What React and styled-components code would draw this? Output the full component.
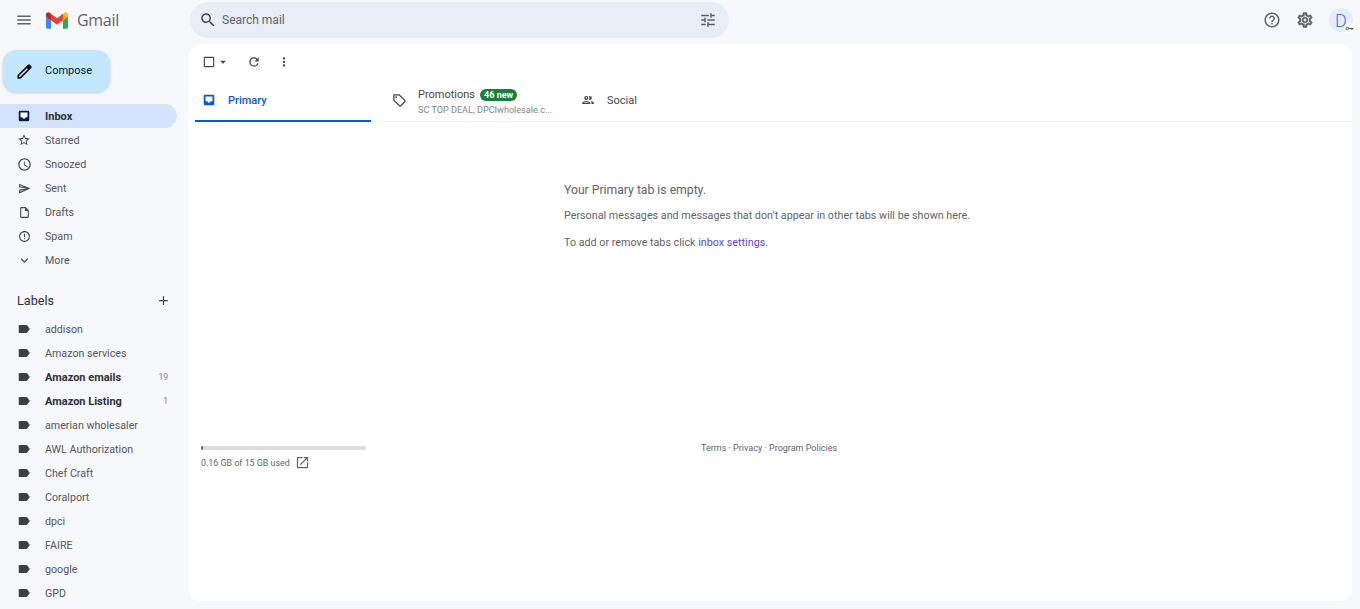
import styled, { createGlobalStyle } from "styled-components";

const GlobalStyle = createGlobalStyle`
  html, body {
    margin: 0;
    padding: 0;
    height: 100%;
    overflow: hidden;
    background-color: #f6f8fc;
    font-family: Roboto, "Liberation Sans", sans-serif;
    color: #444746;
  }
`;

const paths = {
  menu: "M3 18h18v-2H3v2zm0-5h18v-2H3v2zm0-7v2h18V6H3z",
  pencil: "M20.41 4.94l-1.35-1.35c-.78-.78-2.05-.78-2.83 0L3 16.82V21h4.18L20.41 7.77c.79-.78.79-2.05 0-2.83zm-14 14.12L5 19v-1.36l9.82-9.82 1.41 1.41-9.82 9.83z",
  star: "M22 9.24l-7.19-.62L12 2 9.19 8.63 2 9.24l5.46 4.73L5.82 21 12 17.27 18.18 21l-1.63-7.03L22 9.24zM12 15.4l-3.76 2.27 1-4.28-3.32-2.88 4.38-.38L12 6.1l1.71 4.04 4.38.38-3.32 2.88 1 4.28L12 15.4z",
  clock: "M11.99 2C6.47 2 2 6.48 2 12s4.47 10 9.99 10C17.52 22 22 17.52 22 12S17.52 2 11.99 2zM12 20c-4.42 0-8-3.58-8-8s3.58-8 8-8 8 3.58 8 8-3.58 8-8 8zm.5-13H11v6l5.25 3.15.75-1.23-4.5-2.67z",
  send: "M4.01 6.03l7.51 3.22-7.52-1 .01-2.22m7.5 8.72L4 17.97v-2.22l7.51-1M2.01 3L2 10l15 2-15 2 .01 7L23 12 2.01 3z",
  draft: "M14 2H6c-1.1 0-1.99.9-1.99 2L4 20c0 1.1.89 2 1.99 2H18c1.1 0 2-.9 2-2V8l-6-6zM6 20V4h7v5h5v11H6z",
  spam: "M11 15h2v2h-2zm0-8h2v6h-2zm.99-5C6.47 2 2 6.48 2 12s4.47 10 9.99 10C17.52 22 22 17.52 22 12S17.52 2 11.99 2zM12 20c-4.42 0-8-3.58-8-8s3.58-8 8-8 8 3.58 8 8-3.58 8-8 8z",
  chevron: "M16.59 8.59L12 13.17 7.41 8.59 6 10l6 6 6-6z",
  plus: "M19 13h-6v6h-2v-6H5v-2h6V5h2v6h6v2z",
  label: "M17.63 5.84C17.27 5.33 16.67 5 16 5L5 5.01C3.9 5.01 3 5.9 3 7v10c0 1.1.9 1.99 2 1.99L16 19c.67 0 1.27-.33 1.63-.84L22 12l-4.37-6.16z",
  search: "M15.5 14h-.79l-.28-.27C15.41 12.59 16 11.11 16 9.5 16 5.91 13.09 3 9.5 3S3 5.91 3 9.5 5.91 16 9.5 16c1.61 0 3.09-.59 4.23-1.57l.27.28v.79l5 4.99L20.49 19l-4.99-5zm-6 0C7.01 14 5 11.99 5 9.5S7.01 5 9.5 5 14 7.01 14 9.5 11.99 14 9.5 14z",
  tune: "M3 17v2h6v-2H3zM3 5v2h10V5H3zm10 16v-2h8v-2h-8v-2h-2v6h2zM7 9v2H3v2h4v2h2V9H7zm14 4v-2H11v2h10zm-6-4h2V7h4V5h-4V3h-2v6z",
  help: "M11 18h2v-2h-2v2zm1-16C6.48 2 2 6.48 2 12s4.48 10 10 10 10-4.48 10-10S17.52 2 12 2zm0 18c-4.41 0-8-3.59-8-8s3.59-8 8-8 8 3.59 8 8-3.59 8-8 8zm0-14c-2.21 0-4 1.79-4 4h2c0-1.1.9-2 2-2s2 .9 2 2c0 2-3 1.75-3 5h2c0-2.25 3-2.5 3-5 0-2.21-1.79-4-4-4z",
  settings: "M19.43 12.98c.04-.32.07-.64.07-.98 0-.34-.03-.66-.07-.98l2.11-1.65c.19-.15.24-.42.12-.64l-2-3.46c-.09-.16-.26-.25-.44-.25-.06 0-.12.01-.17.03l-2.49 1c-.52-.4-1.08-.73-1.69-.98l-.38-2.65C14.46 2.18 14.25 2 14 2h-4c-.25 0-.46.18-.49.42l-.38 2.65c-.61.25-1.17.59-1.69.98l-2.49-1c-.06-.02-.12-.03-.18-.03-.17 0-.34.09-.43.25l-2 3.46c-.13.22-.07.49.12.64l2.11 1.65c-.04.32-.07.65-.07.98 0 .33.03.66.07.98l-2.11 1.65c-.19.15-.24.42-.12.64l2 3.46c.09.16.26.25.44.25.06 0 .12-.01.17-.03l2.49-1c.52.4 1.08.73 1.69.98l.38 2.65c.03.24.24.42.49.42h4c.25 0 .46-.18.49-.42l.38-2.65c.61-.25 1.17-.59 1.69-.98l2.49 1c.06.02.12.03.18.03.17 0 .34-.09.43-.25l2-3.46c.12-.22.07-.49-.12-.64l-2.11-1.65zm-1.98-1.71c.04.31.05.52.05.73 0 .21-.02.43-.05.73l-.14 1.13.89.7 1.08.84-.7 1.21-1.27-.51-1.04-.42-.9.68c-.43.32-.84.56-1.25.73l-1.06.43-.16 1.13-.2 1.35h-1.4l-.19-1.35-.16-1.13-1.06-.43c-.43-.18-.83-.41-1.23-.71l-.91-.7-1.06.43-1.27.51-.7-1.21 1.08-.84.89-.7-.14-1.13c-.03-.31-.05-.54-.05-.74s.02-.43.05-.73l.14-1.13-.89-.7-1.08-.84.7-1.21 1.27.51 1.04.42.9-.68c.43-.32.84-.56 1.25-.73l1.06-.43.16-1.13.2-1.35h1.39l.19 1.35.16 1.13 1.06.43c.43.18.83.41 1.23.71l.91.7 1.06-.43 1.27-.51.7 1.21-1.07.85-.89.7.14 1.13zM12 8c-2.21 0-4 1.79-4 4s1.79 4 4 4 4-1.79 4-4-1.79-4-4-4zm0 6c-1.1 0-2-.9-2-2s.9-2 2-2 2 .9 2 2-.9 2-2 2z",
  refresh: "M17.65 6.35C16.2 4.9 14.21 4 12 4c-4.42 0-7.99 3.58-7.99 8s3.57 8 7.99 8c3.73 0 6.84-2.55 7.73-6h-2.08c-.82 2.33-3.04 4-5.65 4-3.31 0-6-2.69-6-6s2.69-6 6-6c1.66 0 3.14.69 4.22 1.78L13 11h7V4l-2.35 2.35z",
  more: "M12 8c1.1 0 2-.9 2-2s-.9-2-2-2-2 .9-2 2 .9 2 2 2zm0 2c-1.1 0-2 .9-2 2s.9 2 2 2 2-.9 2-2-.9-2-2-2zm0 6c-1.1 0-2 .9-2 2s.9 2 2 2 2-.9 2-2-.9-2-2-2z",
  tag: "M21.41 11.58l-9-9C12.05 2.22 11.55 2 11 2H4c-1.1 0-2 .9-2 2v7c0 .55.22 1.05.59 1.42l9 9c.36.36.86.58 1.41.58s1.05-.22 1.41-.59l7-7c.37-.36.59-.86.59-1.41s-.23-1.06-.59-1.42zM13 20.01L4 11V4h7v-.01l9 8.99-7 7.02zM6.5 5A1.5 1.5 0 1 0 6.5 8 1.5 1.5 0 1 0 6.5 5z",
  people: "M9 13.75c-2.34 0-7 1.17-7 3.5V19h14v-1.75c0-2.33-4.66-3.5-7-3.5zM4.34 17c.84-.58 2.87-1.25 4.66-1.25s3.82.67 4.66 1.25H4.34zM9 12c1.93 0 3.5-1.57 3.5-3.5S10.93 5 9 5 5.5 6.57 5.5 8.5 7.07 12 9 12zm0-5c.83 0 1.5.67 1.5 1.5S9.83 10 9 10s-1.5-.67-1.5-1.5S8.17 7 9 7zm7.04 6.81c1.16.84 1.96 1.96 1.96 3.44V19h4v-1.75c0-2.02-3.5-3.17-5.96-3.44zM15 12c1.93 0 3.5-1.57 3.5-3.5S16.93 5 15 5c-.54 0-1.04.13-1.5.35.63.89 1 1.98 1 3.15s-.37 2.26-1 3.15c.46.22.96.35 1.5.35z",
  open: "M19 19H5V5h7V3H5c-1.11 0-2 .9-2 2v14c0 1.1.89 2 2 2h14c1.1 0 2-.9 2-2v-7h-2v7zM14 3v2h3.59l-9.83 9.83 1.41 1.41L19 6.41V10h2V3h-7z",
  checkbox: "M19 5v14H5V5h14m0-2H5c-1.1 0-2 .9-2 2v14c0 1.1.9 2 2 2h14c1.1 0 2-.9 2-2V5c0-1.1-.9-2-2-2z",
  caret: "M7 10l5 5 5-5z",
};

const Svg = styled.svg`
  flex-shrink: 0;
  display: block;
`;

function Icon({ name, size = 16, color = "#444746", weight = 0 }) {
  return (
    <Svg width={size} height={size} viewBox="0 0 24 24" fill={color} stroke={weight ? color : "none"} strokeWidth={weight}>
      <path d={paths[name]} />
    </Svg>
  );
}

// filled tray: dark rounded square with a white notched window
function InboxIcon({ color }) {
  return (
    <Svg width="14" height="14" viewBox="0 0 24 24">
      <path fill={color} d="M5 3h14c1.1 0 2 .9 2 2v14c0 1.1-.9 2-2 2H5c-1.1 0-2-.9-2-2V5c0-1.1.9-2 2-2z" />
      <path fill="#fff" d="M6 6h12v8h-3.4c-.3 1.6-1.3 2.6-2.6 2.6s-2.3-1-2.6-2.6H6z" />
    </Svg>
  );
}

function KeyIcon() {
  return (
    <Svg width="9" height="9" viewBox="0 0 10 10" fill="none" stroke="#444746" strokeWidth="1">
      <circle cx="2.6" cy="5" r="1.4" />
      <path d="M4 5h5M7 5v1.4M8.6 5v1.4" />
    </Svg>
  );
}

function GmailLogo() {
  return (
    <Svg width="22" height="17" viewBox="0 0 256 193">
      <path fill="#4285F4" d="M58.182 192.05V93.14L27.507 65.077 0 49.504v125.091c0 9.658 7.825 17.455 17.455 17.455h40.727Z" />
      <path fill="#34A853" d="M197.818 192.05h40.727c9.659 0 17.455-7.826 17.455-17.455V49.505l-31.156 17.837-27.026 25.798v98.91Z" />
      <path fill="#EA4335" d="m58.182 93.14-4.174-38.647 4.174-36.989L128 69.868l69.818-52.364 4.669 34.992-4.669 40.644L128 145.504z" />
      <path fill="#FBBC04" d="M197.818 17.504V93.14L256 49.504V26.231c0-21.585-24.64-33.89-41.89-20.945l-16.292 12.218Z" />
      <path fill="#C5221F" d="M0 49.504l26.759 20.07L58.182 93.14V17.504L41.89 5.286C24.61-7.66 0 4.646 0 26.23v23.273Z" />
    </Svg>
  );
}

const Page = styled.div`
  height: 609px;
  display: flex;
  flex-direction: column;
  overflow: hidden;
`;

const Header = styled.header`
  height: 44px;
  flex-shrink: 0;
  display: flex;
  align-items: flex-start;
  padding-top: 2px;
  box-sizing: border-box;
`;

const Brand = styled.div`
  width: 190px;
  height: 36px;
  flex-shrink: 0;
  display: flex;
  align-items: center;
  padding-left: 15px;
  box-sizing: border-box;
`;

const Logo = styled.div`
  margin-left: 13px;
  display: flex;
  align-items: center;
  gap: 9px;
`;

const LogoText = styled.span`
  font-family: "Open Sans", Roboto, sans-serif;
  font-size: 16px;
  color: #5f6368;
  letter-spacing: -0.3px;
`;

const SearchBar = styled.div`
  width: 539px;
  height: 36px;
  flex-shrink: 0;
  display: flex;
  align-items: center;
  padding: 0 12px 0 9px;
  box-sizing: border-box;
  background-color: #e9eef6;
  border-radius: 18px;
  gap: 5px;
`;

const SearchText = styled.span`
  flex: 1;
  font-size: 12px;
  color: #5f6368;
`;

const HeaderRight = styled.div`
  margin-left: auto;
  height: 36px;
  display: flex;
  align-items: center;
  padding-right: 7px;
`;

const HeaderIcon = styled.div`
  width: 33px;
  display: flex;
  justify-content: center;
`;

const Avatar = styled.div`
  position: relative;
  width: 24px;
  height: 24px;
  margin-left: 8px;
  border-radius: 50%;
  background-color: #e6ecfa;
  color: #4a6ee0;
  font-size: 18px;
  font-weight: 300;
  display: flex;
  align-items: center;
  justify-content: center;
`;

const AvatarBadge = styled.div`
  position: absolute;
  right: -1px;
  bottom: -1px;
  width: 10px;
  height: 10px;
  border-radius: 50%;
  background-color: #fff;
  display: flex;
  align-items: center;
  justify-content: center;
`;

const Content = styled.div`
  flex: 1;
  min-height: 0;
  display: flex;
`;

const Sidebar = styled.nav`
  width: 189px;
  flex-shrink: 0;
  overflow: hidden;
  padding-top: 6px;
  box-sizing: border-box;
`;

const Compose = styled.button`
  width: 107px;
  height: 42px;
  margin-left: 3px;
  padding: 0 0 0 12px;
  border: none;
  border-radius: 14px;
  background-color: #c2e7ff;
  box-shadow: 0 1px 3px rgba(60, 64, 67, 0.25);
  display: flex;
  align-items: center;
  gap: 11px;
  font-family: inherit;
  font-size: 11px;
  font-weight: 400;
  color: #001d35;
`;

const ComposeLabel = styled.span`
  padding-bottom: 2px;
`;

const NavList = styled.div`
  margin-top: 12px;
`;

const NavItem = styled.div`
  width: 177px;
  height: 24px;
  box-sizing: border-box;
  padding: 0 9px 0 16px;
  display: flex;
  align-items: center;
  gap: 13px;
  border-radius: 0 12px 12px 0;
  font-size: ${({ $bold }) => ($bold ? "11px" : "10.7px")};
  font-weight: ${({ $bold }) => ($bold ? 700 : 400)};
  color: ${({ $bold }) => ($bold ? "#303134" : "#555759")};
  background-color: ${({ $active }) => ($active ? "#d3e3fd" : "transparent")};
`;

const IconSlot = styled.span`
  width: 16px;
  flex-shrink: 0;
  display: flex;
  justify-content: center;
`;

const NavName = styled.span`
  flex: 1;
  white-space: nowrap;
`;

const NavCount = styled.span`
  font-size: 8.5px;
  font-weight: 400;
  color: #80868b;
`;

const LabelsHeader = styled.div`
  width: 177px;
  box-sizing: border-box;
  margin: 16px 0 5px;
  height: 24px;
  padding: 0 6px 0 17px;
  display: flex;
  align-items: center;
  justify-content: space-between;
  font-size: 12.6px;
  font-weight: 400;
  color: #303134;
`;

const Panel = styled.main`
  flex: 1;
  margin: 0 8px 8px 0;
  background-color: #fff;
  border-radius: 12px;
  overflow: hidden;
`;

const Toolbar = styled.div`
  height: 36px;
  display: flex;
  align-items: center;
  padding-left: 13px;
`;

const ToolGroup = styled.div`
  display: flex;
  align-items: center;
  margin-right: ${({ $gap }) => $gap}px;
`;

const Tabs = styled.div`
  height: 42px;
  margin: 0 0 0 6px;
  display: flex;
  border-bottom: 1px solid #f0f1f3;
  box-sizing: border-box;
`;

const Tab = styled.div`
  width: ${({ $w }) => $w}px;
  box-sizing: border-box;
  padding-left: ${({ $pad }) => $pad}px;
  display: flex;
  align-items: center;
  gap: 11px;
  margin-bottom: -1px;
  border-bottom: 2px solid ${({ $active }) => ($active ? "#0b57d0" : "transparent")};
  font-size: 11px;
  font-weight: ${({ $active }) => ($active ? 500 : 400)};
  color: ${({ $active }) => ($active ? "#0b57d0" : "#444746")};
`;

const TabText = styled.div`
  display: flex;
  flex-direction: column;
  gap: 4px;
  padding-top: 3px;
`;

const TabTitleRow = styled.div`
  display: flex;
  align-items: center;
  gap: 5px;
`;

const Badge = styled.span`
  height: 12px;
  padding: 0 4px;
  border-radius: 6px;
  background-color: #188038;
  color: #fff;
  font-size: 9px;
  font-weight: 700;
  line-height: 12px;
`;

const TabSub = styled.span`
  font-size: 9.1px;
  font-weight: 400;
  color: #80868b;
`;

const Empty = styled.div`
  margin: 60px 0 0 375px;
  font-size: 10.75px;
  color: #5f6368;
`;

const EmptyTitle = styled.div`
  font-size: 12.2px;
  line-height: 16px;
`;

const EmptyLine = styled.div`
  margin-top: ${({ $top }) => $top}px;
  line-height: 14px;
`;

const Link = styled.span`
  color: #5a48c4;
`;

const Footer = styled.footer`
  margin-top: 193px;
  padding: 0 0 0 12px;
  display: grid;
  grid-template-columns: 165px 1fr;
`;

const StorageBar = styled.div`
  height: 4px;
  margin-top: 3px;
  border-radius: 2px;
  background-color: #dadce0;
  overflow: hidden;
`;

const StorageFill = styled.div`
  height: 100%;
  background-color: #5f6368;
`;

const StorageText = styled.div`
  margin-top: 5px;
  font-size: 8.9px;
  color: #5f6368;
  display: flex;
  align-items: center;
  gap: 5px;
`;

const Terms = styled.div`
  margin-left: 335px;
  font-size: 9px;
  line-height: 10px;
  color: #5f6368;
`;

const labels = [
  { name: "addison" },
  { name: "Amazon services" },
  { name: "Amazon emails", count: 19, bold: true },
  { name: "Amazon Listing", count: 1, bold: true },
  { name: "amerian wholesaler" },
  { name: "AWL Authorization" },
  { name: "Chef Craft" },
  { name: "Coralport" },
  { name: "dpci" },
  { name: "FAIRE" },
  { name: "google" },
  { name: "GPD" },
];

const folders = [
  { name: "Starred", icon: "star", size: 14 },
  { name: "Snoozed", icon: "clock", size: 15 },
  { name: "Sent", icon: "send", size: 13 },
  { name: "Drafts", icon: "draft", size: 13 },
  { name: "Spam", icon: "spam", size: 13 },
  { name: "More", icon: "chevron", size: 15 },
];

export default function App() {
  return (
    <Page>
      <GlobalStyle />
      <Header>
        <Brand>
          <Icon name="menu" size={18} color="#5f6368" />
          <Logo>
            <GmailLogo />
            <LogoText>Gmail</LogoText>
          </Logo>
        </Brand>
        <SearchBar>
          <Icon name="search" size={18} />
          <SearchText>Search mail</SearchText>
          <Icon name="tune" size={18} color="#5f6368" />
        </SearchBar>
        <HeaderRight>
          <HeaderIcon><Icon name="help" size={18} color="#5f6368" /></HeaderIcon>
          <HeaderIcon><Icon name="settings" size={18} color="#5f6368" weight={0.7} /></HeaderIcon>
          <Avatar>
            D
            <AvatarBadge>
              <KeyIcon />
            </AvatarBadge>
          </Avatar>
        </HeaderRight>
      </Header>
      <Content>
        <Sidebar>
          <Compose>
            <Icon name="pencil" size={19} color="#111" />
            <ComposeLabel>Compose</ComposeLabel>
          </Compose>
          <NavList>
            <NavItem $active $bold>
              <IconSlot><InboxIcon color="#041e49" /></IconSlot>
              <NavName>Inbox</NavName>
            </NavItem>
            {folders.map((f) => (
              <NavItem key={f.name}>
                <IconSlot><Icon name={f.icon} size={f.size} /></IconSlot>
                <NavName>{f.name}</NavName>
              </NavItem>
            ))}
          </NavList>
          <LabelsHeader>
            Labels
            <Icon name="plus" size={15} />
          </LabelsHeader>
          {labels.map((l) => (
            <NavItem key={l.name} $bold={l.bold}>
              <IconSlot><Icon name="label" size={14} color="#3c4043" /></IconSlot>
              <NavName>{l.name}</NavName>
              {l.count && <NavCount>{l.count}</NavCount>}
            </NavItem>
          ))}
        </Sidebar>
        <Panel>
          <Toolbar>
            <ToolGroup $gap={17}>
              <Icon name="checkbox" size={14} />
              <Icon name="caret" size={14} />
            </ToolGroup>
            <ToolGroup $gap={16}>
              <Icon name="refresh" size={14} />
            </ToolGroup>
            <ToolGroup $gap={0}>
              <Icon name="more" size={14} />
            </ToolGroup>
          </Toolbar>
          <Tabs>
            <Tab $w={176} $pad={6} $active>
              <IconSlot><InboxIcon color="#0b57d0" /></IconSlot>
              Primary
            </Tab>
            <Tab $w={190} $pad={20}>
              <IconSlot><Icon name="tag" size={15} /></IconSlot>
              <TabText>
                <TabTitleRow>
                  Promotions
                  <Badge>46 new</Badge>
                </TabTitleRow>
                <TabSub>SC TOP DEAL, DPCIwholesale.c...</TabSub>
              </TabText>
            </Tab>
            <Tab $w={150} $pad={19}>
              <IconSlot><Icon name="people" size={14} /></IconSlot>
              Social
            </Tab>
          </Tabs>
          <Empty>
            <EmptyTitle>Your Primary tab is empty.</EmptyTitle>
            <EmptyLine $top={11}>Personal messages and messages that don’t appear in other tabs will be shown here.</EmptyLine>
            <EmptyLine $top={13}>
              To add or remove tabs click <Link>inbox settings</Link>.
            </EmptyLine>
          </Empty>
          <Footer>
            <div>
              <StorageBar>
                <StorageFill style={{ width: `${(0.16 / 15) * 100}%` }} />
              </StorageBar>
              <StorageText>
                0.16 GB of 15 GB used
                <Icon name="open" size={15} color="#5f6368" />
              </StorageText>
            </div>
            <Terms>Terms · Privacy · Program Policies</Terms>
          </Footer>
        </Panel>
      </Content>
    </Page>
  );
}
